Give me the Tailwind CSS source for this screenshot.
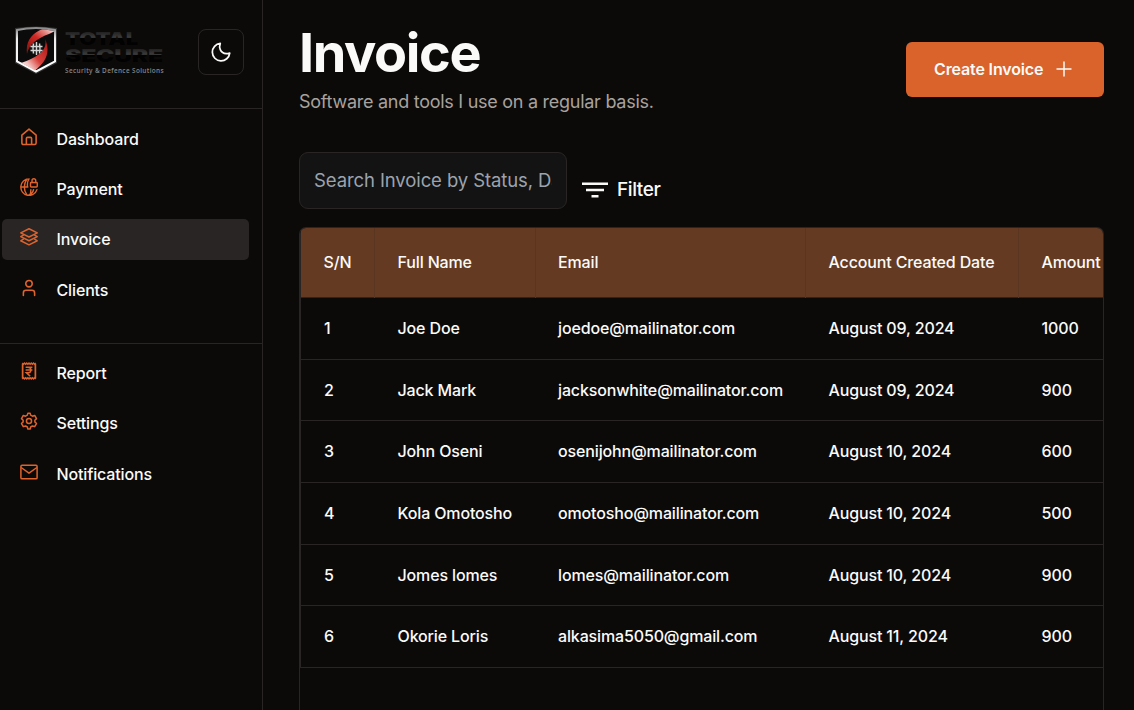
<!DOCTYPE html>
<html lang="en">
<head>
<meta charset="utf-8">
<title>Invoice</title>
<script src="https://cdn.jsdelivr.net/npm/@tailwindcss/browser@4"></script>
</head>
<body class="flex h-[710px] w-[1134px] overflow-hidden bg-[#0c0a09] font-['Inter',sans-serif] text-base font-medium tracking-[-0.140px] text-[#fafaf9]">
<aside class="flex w-[263px] shrink-0 flex-col border-r border-[#292524]">
  <div class="flex h-[109px] shrink-0 items-start justify-between border-b border-[#292524] pl-[14px] pr-[18px] pt-[26px]">
    <div class="flex gap-[7px]">
      <svg class="h-[48px] w-[44px]" viewBox="0 0 44 48" fill="none">
        <defs>
          <linearGradient id="rim" x1="0" y1="0" x2="0" y2="1"><stop offset="0" stop-color="#888"/><stop offset=".25" stop-color="#eee"/><stop offset="1" stop-color="#fff"/></linearGradient>
          <linearGradient id="upper" x1="1" y1="0" x2="0" y2="1"><stop offset="0" stop-color="#fff"/><stop offset=".25" stop-color="#e58a85"/><stop offset=".5" stop-color="#cf2a25"/><stop offset="1" stop-color="#7c0f0c"/></linearGradient>
          <linearGradient id="lower" x1="1" y1="0" x2="0" y2="1"><stop offset="0" stop-color="#a81512"/><stop offset=".5" stop-color="#d8403b"/><stop offset=".75" stop-color="#f3c6c3"/><stop offset="1" stop-color="#fff"/></linearGradient>
          <clipPath id="inner"><path d="M4 5Q22 1 40 5V35L22 45L4 35Z"/></clipPath>
        </defs>
        <path d="M1 2Q22-1 43 2V37L22 48L1 37Z" fill="#333"/>
        <path d="M3 4Q22 0 41 4V35.500L22 45.500L3 35.500Z" fill="#0b0b0b" stroke="url(#rim)" stroke-width="2"/>
        <g clip-path="url(#inner)">
          <path d="M31 2C20 6 11 13 13 28C15 18 24 12 35 8L41 5V2Z" fill="url(#upper)"/>
          <path d="M31 13C34 23 25 31 7 37L19 46C32 37 37 26 31 13Z" fill="url(#lower)"/>
        </g>
        <circle cx="22.500" cy="22.500" r="6" fill="#1a1a1a"/>
        <path d="M16.500 20.500H28.500M16.500 24.500H28.500M22.500 16V29M19.500 17.500Q18.500 22.500 19.500 27.500M25.500 17.500Q26.500 22.500 25.500 27.500" stroke="#d6d6d6" stroke-width="1.400"/>
      </svg>
      <svg class="h-[50px] w-[102px]" viewBox="0 0 102 50">
        <defs>
          <linearGradient id="t1" gradientUnits="userSpaceOnUse" x1="0" y1="5" x2="0" y2="19"><stop offset="0" stop-color="#1c1c1c"/><stop offset=".46" stop-color="#3c3c3c"/><stop offset=".5" stop-color="#020202"/><stop offset="1" stop-color="#020202"/></linearGradient>
          <linearGradient id="t2" gradientUnits="userSpaceOnUse" x1="0" y1="22" x2="0" y2="36"><stop offset="0" stop-color="#1c1c1c"/><stop offset=".46" stop-color="#3c3c3c"/><stop offset=".5" stop-color="#020202"/><stop offset="1" stop-color="#020202"/></linearGradient>
        </defs>
        <text x="0" y="18.500" textLength="73" lengthAdjust="spacingAndGlyphs" font-family="Inter" font-weight="900" font-size="17.500" fill="url(#t1)">TOTAL</text>
        <text x="0" y="35.800" textLength="98" lengthAdjust="spacingAndGlyphs" font-family="Inter" font-weight="900" font-size="17.500" fill="url(#t2)">SECURE</text>
        <text x="0" y="47" textLength="98.500" lengthAdjust="spacing" font-family="Open Sans" font-weight="600" font-size="6.400" fill="#858585">Security &amp; Defence Solutions</text>
      </svg>
    </div>
    <button class="mt-[3px] flex size-[46px] items-center justify-center rounded-lg border border-[#292524]">
      <svg class="size-[22px]" viewBox="0 0 24 24" fill="none" stroke="currentColor" stroke-width="1.900" stroke-linecap="round" stroke-linejoin="round"><path d="M21.500 13.200A9.500 9.500 0 1 1 11.200 2.700Q9.800 6.500 11.200 9.500C13 13.500 17 14.500 21.500 13.200Z"/></svg>
    </button>
  </div>
  <nav class="flex h-[234.500px] shrink-0 flex-col gap-[9px] border-b border-[#292524] pl-[2px] pr-[13px] pt-[9px]">
    <a class="flex h-[41.300px] items-center rounded-[5px] pl-[18px]"><svg class="-mt-1 size-[18px] text-[#de632c]" viewBox="0 0 24 24" fill="none" stroke="currentColor" stroke-width="2.100" stroke-linejoin="round"><path d="M2.500 9.500 12 1.500l9.500 8V20q0 2-2 2h-15q-2 0-2-2Z"/><path d="M8.500 22v-8q0-1.500 1.500-1.500h4q1.500 0 1.500 1.500v8"/></svg><span class="ml-[18.500px]">Dashboard</span></a>
    <a class="flex h-[41.300px] items-center rounded-[5px] pl-[18px]"><svg class="-mt-1 size-[18px] text-[#de632c]" viewBox="0 0 24 24" fill="none" stroke="currentColor" stroke-width="1.900" stroke-linecap="round" stroke-linejoin="round"><path d="M12 1.200A11 11 0 1 0 22.600 15.500M1.300 12H10.500M9 1.800C5 8 5 16 9 22.300M12 22.700C16 21 17.500 18.500 18 15.500M12 1.200C10 4 9.500 8 10 12M13 22.500C14.500 20 14.500 18 14.500 15.500"/><rect x="14" y="6" width="9" height="6" rx="1"/><path d="M16 6V3.500a2.500 2.500 0 0 1 5 0V6"/></svg><span class="ml-[18.500px]">Payment</span></a>
    <a class="flex h-[41.300px] items-center rounded-[5px] bg-[#292524] pl-[18px]"><svg class="-mt-1 size-[18px] text-[#de632c]" viewBox="0 0 24 24" fill="none" stroke="currentColor" stroke-width="1.900" stroke-linecap="round" stroke-linejoin="round"><path d="M1 6.500 12 1l11 5.500L12 12Z"/><path d="M4.500 9.500 1 11.500 12 17l11-5.500-3.500-2"/><path d="M4.500 14.800 1 17l11 5.500L23 17l-3.500-2.200"/></svg><span class="ml-[18.500px]">Invoice</span></a>
    <a class="flex h-[41.300px] items-center rounded-[5px] pl-[18px]"><svg class="-mt-1 size-[18px] text-[#de632c]" viewBox="0 0 24 24" fill="none" stroke="currentColor" stroke-width="2.100" stroke-linecap="round"><circle cx="12" cy="6.200" r="4.300"/><path d="M4.500 22v-3.500q0-3.500 3.500-3.500h8q3.500 0 3.500 3.500V22"/></svg><span class="ml-[18.500px]">Clients</span></a>
  </nav>
  <nav class="flex flex-col gap-[9.200px] pl-[2px] pt-[8.800px]">
    <a class="flex h-[41.300px] items-center pl-[18px]"><svg class="-mt-1 size-[18px] text-[#de632c]" viewBox="0 0 24 24" fill="none" stroke="currentColor" stroke-width="2"><path d="M3.500 2.500v19M20.500 2.500v19" stroke-width="2.300"/><path d="M3 1.500l1.500 1.500L6 1.500 7.500 3 9 1.500l1.500 1.500L12 1.500 13.500 3 15 1.500 16.500 3 18 1.500 19.500 3 21 1.500M3 22.500 4.500 21 6 22.500 7.500 21 9 22.500l1.500-1.500 1.500 1.500 1.500-1.500 1.500 1.500 1.500-1.500 1.500 1.500 1.500-1.500 1.500 1.500"/><path d="M7.500 7h9M7.500 10.800h9M8 7h2.500q4 0 4 3.800T10.500 14.300H8.500l5 4.500"/></svg><span class="ml-[18.500px]">Report</span></a>
    <a class="flex h-[41.300px] items-center pl-[18px]"><svg class="-mt-1 size-[18px] text-[#de632c]" viewBox="0 0 24 24" fill="none" stroke="currentColor" stroke-width="2" stroke-linejoin="round"><path d="M9.800 4.200 10.500 1.500h3L14.200 4.200 16.600 5.600 19.600 4.600 22 8.800 19.800 11v2.200L22 15.400 19.600 19.500 16.600 18.600 14.200 20 13.500 22.800h-3L9.800 20 7.400 18.600 4.400 19.500 2 15.400 4.200 13.200V11L2 8.800 4.400 4.600 7.400 5.600Z"/><circle cx="12" cy="12" r="3.400"/></svg><span class="ml-[18.500px]">Settings</span></a>
    <a class="flex h-[41.300px] items-center pl-[18px]"><svg class="-mt-1 size-[18px] text-[#de632c]" viewBox="0 0 24 24" fill="none" stroke="currentColor" stroke-width="2" stroke-linejoin="round"><rect x="1.200" y="3" width="21.600" height="18" rx="1.500"/><path d="M1.500 6 12 13.500 22.500 6"/></svg><span class="ml-[18.500px]">Notifications</span></a>
  </nav>
</aside>
<main class="flex min-w-0 flex-1 flex-col pl-[36px] pr-[30.500px]">
  <header class="flex h-[152px] shrink-0 items-start justify-between">
    <div class="pt-[24px]">
      <h1 class="text-[54px] font-bold leading-[58px] tracking-[-1.400px]">Invoice</h1>
      <p class="mt-[6px] text-lg font-normal leading-7 tracking-[-0.270px] text-[#a8a29e]">Software and tools I use on a regular basis.</p>
    </div>
    <button class="mt-[42px] flex h-[55px] w-[197.500px] items-center rounded-md bg-[#da622b] pb-[2px] pl-[28px] font-semibold"><span>Create Invoice</span>
      <svg class="ml-[13px] mt-px size-4" viewBox="0 0 16 16" stroke="currentColor" stroke-width="1.500"><path d="M8 .500v15M.500 8h15"/></svg>
    </button>
  </header>
  <div class="flex h-[75px] shrink-0 items-start">
    <div class="h-[57px] w-[268px] rounded-[9px] border border-[#292524] bg-[#131313] px-[14px]"><div class="overflow-hidden whitespace-nowrap text-[18.500px] font-normal leading-[55px] tracking-[-0.100px] text-[#9ca3af]">Search Invoice by Status, Date</div></div>
    <div class="ml-[14.500px] mt-[24px] flex items-center text-[19px] leading-7 tracking-[-0.400px]">
      <svg class="h-4 w-[26px]" viewBox="0 0 26 16" fill="currentColor"><path d="M0 .500h26v2.500H0ZM4 6.800h18v2.500H4ZM9.500 13h7v2.500h-7Z"/></svg><span class="ml-[9.500px]">Filter</span>
    </div>
  </div>
  <div class="flex-1 overflow-hidden rounded-t-[7px] border border-b-0 border-[#292524]">
    <table class="w-[900px] table-fixed border-collapse border-l border-[#292524] text-left">
      <colgroup><col class="w-[74px]"><col class="w-[160.500px]"><col class="w-[270.500px]"><col class="w-[213px]"><col class="w-[181px]"></colgroup>
      <thead class="bg-[#653a22]"><tr class="h-[69.500px] border-b border-[#292524] [&>th]:border-r [&>th]:border-[#5a3520] [&>th]:pb-[1.500px] [&>th]:pl-[22.500px] [&>th]:font-medium"><th>S/N</th><th>Full Name</th><th>Email</th><th>Account Created Date</th><th>Amount</th></tr></thead>
      <tbody class="[&>tr]:h-[61.700px] [&>tr]:border-b [&>tr]:border-[#292524] [&_td]:pb-[0.600px] [&_td]:pl-[23px]">
        <tr><td>1</td><td>Joe Doe</td><td>joedoe@mailinator.com</td><td>August 09, 2024</td><td>1000</td></tr>
        <tr><td>2</td><td>Jack Mark</td><td>jacksonwhite@mailinator.com</td><td>August 09, 2024</td><td>900</td></tr>
        <tr><td>3</td><td>John Oseni</td><td>osenijohn@mailinator.com</td><td>August 10, 2024</td><td>600</td></tr>
        <tr><td>4</td><td>Kola Omotosho</td><td>omotosho@mailinator.com</td><td>August 10, 2024</td><td>500</td></tr>
        <tr><td>5</td><td>Jomes lomes</td><td>lomes@mailinator.com</td><td>August 10, 2024</td><td>900</td></tr>
        <tr><td>6</td><td>Okorie Loris</td><td>alkasima5050@gmail.com</td><td>August 11, 2024</td><td>900</td></tr>
      </tbody>
    </table>
  </div>
</main>
</body>
</html>
